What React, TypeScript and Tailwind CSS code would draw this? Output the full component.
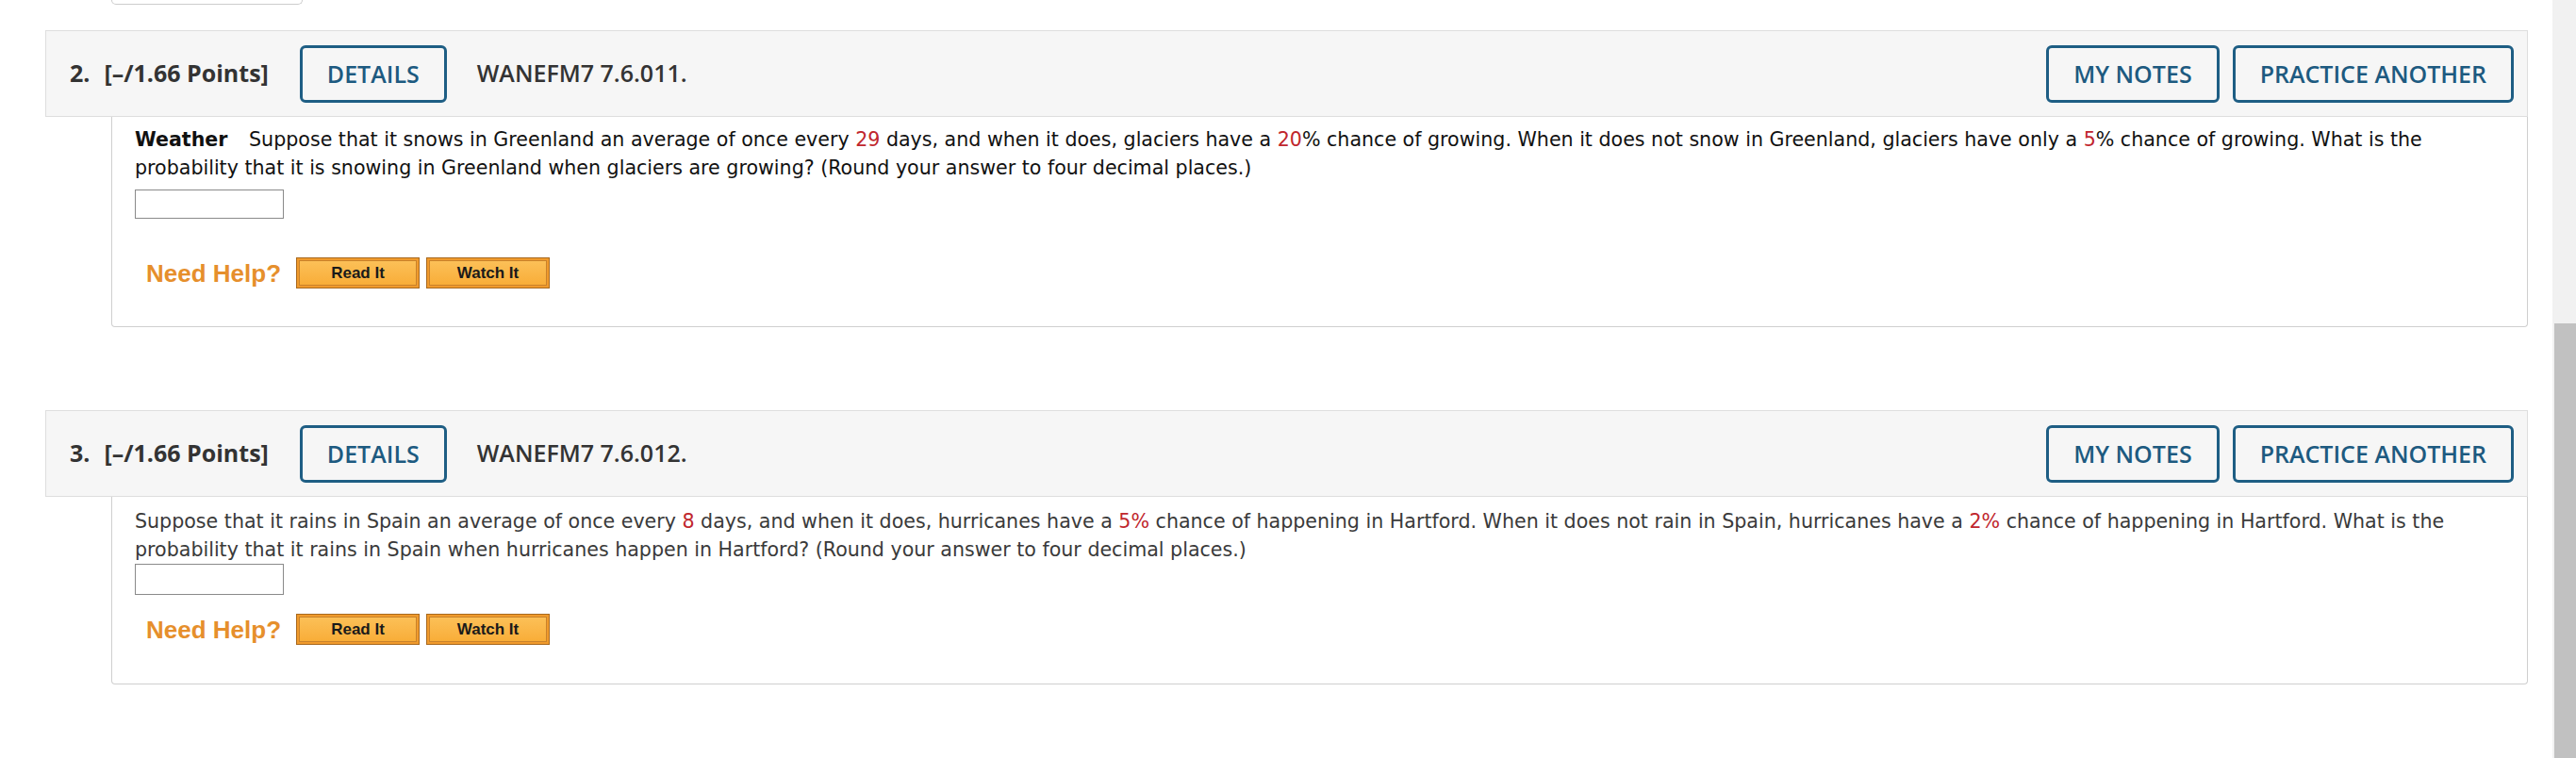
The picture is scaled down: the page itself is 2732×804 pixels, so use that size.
import type { ReactNode } from "react"

const red = "text-[#c0262d]"

const HeaderButton = ({ children }: { children: ReactNode }) => (
  <button
    type="button"
    className="h-[61px] shrink-0 rounded-[6px] border-[3px] border-[#1e5e84] px-[26px] text-[25px] font-semibold text-[#1d5a80] leading-none"
  >
    {children}
  </button>
)

const HelpButton = ({ label }: { label: string }) => (
  <button
    type="button"
    className="h-[33px] w-[131px] border border-[#a8691f] bg-gradient-to-b from-[#fcc25a] to-[#f8ab33] text-[17px] font-bold leading-none text-[#1a1a1a] shadow-[inset_0_0_0_2px_#f09a2c,inset_0_0_0_3px_#c9822b] [font-family:'Liberation_Sans',Arial,sans-serif]"
  >
    {label}
  </button>
)

const NeedHelp = () => (
  <div className="ml-[12px] flex h-[33px] items-center">
    <span className="text-[26px] font-bold leading-none text-[#e68f2c] [font-family:'Liberation_Sans',Arial,sans-serif]">
      Need Help?
    </span>
    <div className="ml-[16px] flex gap-[7px]">
      <HelpButton label="Read It" />
      <HelpButton label="Watch It" />
    </div>
  </div>
)

interface QuestionProps {
  num: number
  code: string
  textColor: string
  children: ReactNode
  bodyClass: string
  inputClass: string
  helpClass: string
}

const Question = ({ num, code, textColor, children, bodyClass, inputClass, helpClass }: QuestionProps) => (
  <section>
    {/* header bar */}
    <div className="flex h-[92px] items-center border border-[#dedede] bg-[#f6f6f6] pl-[25px] pr-[14px] text-[#333] [font-family:'Open_Sans',sans-serif]">
      <span className="text-[25px] font-bold">{num}.</span>
      <span className="ml-[15px] text-[25px] font-bold">[–/1.66 Points]</span>
      <div className="ml-[33px]">
        <HeaderButton>DETAILS</HeaderButton>
      </div>
      <span className="ml-[32px] text-[25px] font-semibold">{code}</span>
      <div className="ml-auto flex gap-[14px]">
        <HeaderButton>MY NOTES</HeaderButton>
        <HeaderButton>PRACTICE ANOTHER</HeaderButton>
      </div>
    </div>
    {/* body */}
    <div
      className={`ml-[70px] rounded-b-[4px] border-x border-b border-[#cfcfcf] bg-white pl-[24px] pr-[24px] ${bodyClass}`}
    >
      <p className={`text-[20.6px] leading-[30px] ${textColor} [font-family:'DejaVu_Sans',Verdana,sans-serif]`}>
        {children}
      </p>
      <input
        type="text"
        className={`block w-[158px] border border-[#8a8a8a] bg-white ${inputClass}`}
      />
      <div className={helpClass}>
        <NeedHelp />
      </div>
    </div>
  </section>
)

export default function App() {
  return (
    <div className="flex h-[804px] w-full overflow-hidden bg-white">
      <main className="flex-1 pl-[48px] pr-[26px]">
        {/* tail of the previous question's control */}
        <div className="ml-[70px] h-[5px] w-[203px] rounded-b-[5px] border-x border-b border-[#cccccc]" />

        <div className="mt-[27px]">
          <Question
            num={2}
            code="WANEFM7 7.6.011."
            textColor="text-[#111]"
            bodyClass="pt-[9px] pb-[40px]"
            inputClass="mt-[8px] h-[31px]"
            helpClass="mt-[41px]"
          >
            <span className="mr-[16px] font-bold">Weather</span> Suppose that it snows in Greenland an average of
            once every <span className={red}>29</span> days, and when it does, glaciers have a{" "}
            <span className={red}>20</span>% chance of growing. When it does not snow in Greenland, glaciers have
            only a <span className={red}>5</span>% chance of growing. What is the probability that it is snowing in
            Greenland when glaciers are growing? (Round your answer to four decimal places.)
          </Question>
        </div>

        <div className="mt-[88px]">
          <Question
            num={3}
            code="WANEFM7 7.6.012."
            textColor="text-[#3a3a3a]"
            bodyClass="pt-[11px] pb-[41px]"
            inputClass="mt-0 h-[33px]"
            helpClass="mt-[20px]"
          >
            Suppose that it rains in Spain an average of once every <span className={red}>8</span> days, and when
            it does, hurricanes have a <span className={red}>5%</span> chance of happening in Hartford. When it
            does not rain in Spain, hurricanes have a <span className={red}>2%</span> chance of happening in
            Hartford. What is the probability that it rains in Spain when hurricanes happen in Hartford? (Round your
            answer to four decimal places.)
          </Question>
        </div>
      </main>

      {/* browser scrollbar */}
      <div className="flex w-[25px] flex-col bg-[#f1f1f1]">
        <div className="ml-[2px] mt-[343px] flex-1 bg-[#c1c1c1]" />
      </div>
    </div>
  )
}
